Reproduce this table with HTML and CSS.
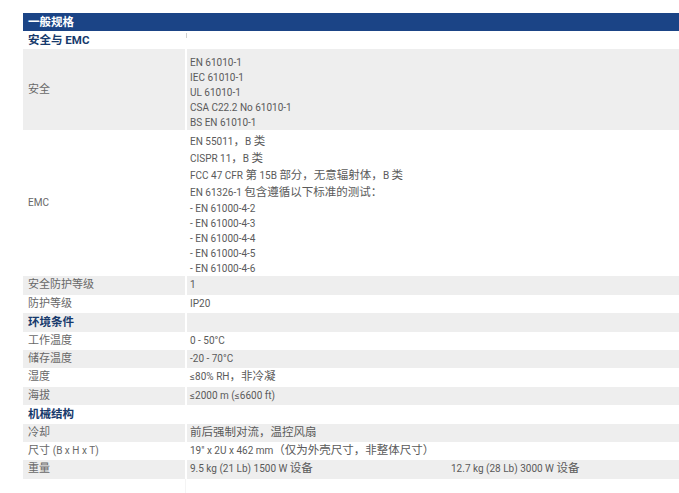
FILE: index.html
```html
<!DOCTYPE html>
<html lang="zh-CN">
<head>
<meta charset="utf-8">
<title>一般规格</title>
<link rel="stylesheet" href="styles.css">
</head>
<body>
<table class="spec">
  <colgroup><col class="c1"><col class="c2"><col class="c3"></colgroup>
  <tr class="head"><th colspan="3">一般规格</th></tr>
  <tr class="sec"><th>安全与 EMC</th><td colspan="2" class="val tick"></td></tr>
  <tr class="alt"><td class="lab">安全</td><td colspan="2" class="val multi safe">
    <div class="ln">EN 61010-1</div>
    <div class="ln">IEC 61010-1</div>
    <div class="ln">UL 61010-1</div>
    <div class="ln">CSA C22.2 No 61010-1</div>
    <div class="ln">BS EN 61010-1</div>
  </td></tr>
  <tr><td class="lab"><span class="en">EMC</span></td><td colspan="2" class="val multi emc">
    <div class="ln cj">EN 55011<span class="zh">，</span>B <span class="zh">类</span></div>
    <div class="ln cj">CISPR 11<span class="zh">，</span>B <span class="zh">类</span></div>
    <div class="ln cj">FCC 47 CFR <span class="zh">第</span> 15B <span class="zh">部分，无意辐射体，</span>B <span class="zh">类</span></div>
    <div class="ln cj">EN 61326-1 <span class="zh">包含遵循以下标准的测试：</span></div>
    <div class="ln">- EN 61000-4-2</div>
    <div class="ln">- EN 61000-4-3</div>
    <div class="ln">- EN 61000-4-4</div>
    <div class="ln">- EN 61000-4-5</div>
    <div class="ln">- EN 61000-4-6</div>
  </td></tr>
  <tr class="alt"><td class="lab">安全防护等级</td><td colspan="2" class="val">1</td></tr>
  <tr><td class="lab">防护等级</td><td colspan="2" class="val">IP20</td></tr>
  <tr class="alt sec"><th>环境条件</th><td colspan="2" class="val"></td></tr>
  <tr><td class="lab">工作温度</td><td colspan="2" class="val">0 - 50°C</td></tr>
  <tr class="alt"><td class="lab">储存温度</td><td colspan="2" class="val">-20 - 70°C</td></tr>
  <tr><td class="lab">湿度</td><td colspan="2" class="val">≤80% RH<span class="zh">，非冷凝</span></td></tr>
  <tr class="alt"><td class="lab">海拔</td><td colspan="2" class="val">≤2000 m (≤6600 ft)</td></tr>
  <tr class="sec"><th>机械结构</th><td colspan="2" class="val"></td></tr>
  <tr class="alt"><td class="lab">冷却</td><td colspan="2" class="val"><span class="zh">前后强制对流，温控风扇</span></td></tr>
  <tr><td class="lab">尺寸 <span class="en">(B x H x T)</span></td><td colspan="2" class="val">19" x 2U x 462 mm<span class="zh">（仅为外壳尺寸，非整体尺寸）</span></td></tr>
  <tr class="alt"><td class="lab">重量</td><td class="val">9.5 kg (21 Lb) 1500 W <span class="zh">设备</span></td><td class="val3">12.7 kg (28 Lb) 3000 W <span class="zh">设备</span></td></tr>
  <tr class="tail"><td></td><td colspan="2" class="val"></td></tr>
</table>
</body>
</html>
```

FILE: styles.css
```css
html, body {
  margin: 0;
  padding: 0;
  background: #ffffff;
}

body {
  font-family: Roboto, "Noto Sans CJK SC", sans-serif;
  font-size: 10px;
  color: #5a5a5a;
}

.spec {
  margin: 13px 0 0 23px;
  width: 656px;
  table-layout: fixed;
  border-collapse: separate;
  border-spacing: 0;
}

.c1 { width: 162px; }
.c2 { width: 263px; }

.spec td,
.spec th {
  padding: 1px 0 1px 3px;
  height: 16.4px;
  line-height: 16.4px;
  text-align: left;
  vertical-align: middle;
  font-weight: normal;
  white-space: nowrap;
}

.spec tr.alt td,
.spec tr.alt th {
  background: #eeeeee;
}

.head th {
  background: #1b4486;
  color: #ffffff;
  font-weight: bold;
  font-size: 11.5px;
  height: 18px;
  line-height: 18px;
  padding: 0 0 0 5px;
}

.sec th {
  padding-left: 5px;
  color: #173a6c;
  font-weight: bold;
  font-size: 11.5px;
}

.spec .lab {
  padding-left: 5px;
  color: #686868;
  font-size: 11px;
}

.spec .lab .en {
  font-size: 10px;
  line-height: 10px;
}

.zh {
  font-size: 11.5px;
  line-height: 10px;
}

.spec .val {
  border-left: 2px solid #ffffff;
}

.spec .val3 {
  padding-left: 3px;
}

.spec td.safe {
  padding: 6px 0 0 3px;
  line-height: 15px;
}

.spec td.emc {
  padding: 3px 0 0 3px;
  line-height: 15px;
}

.ln {
  line-height: 15px;
  height: 15px;
}

.ln.cj {
  line-height: 17px;
  height: 17px;
}

.tick {
  position: relative;
}

.tick::before {
  content: "";
  position: absolute;
  left: -1px;
  top: 2px;
  width: 1px;
  height: 5px;
  background: #d0d0d0;
}

.tail td {
  height: 14px;
  padding: 0;
}

.tail .val {
  border-left: 1px solid #f4f4f4;
}
```
